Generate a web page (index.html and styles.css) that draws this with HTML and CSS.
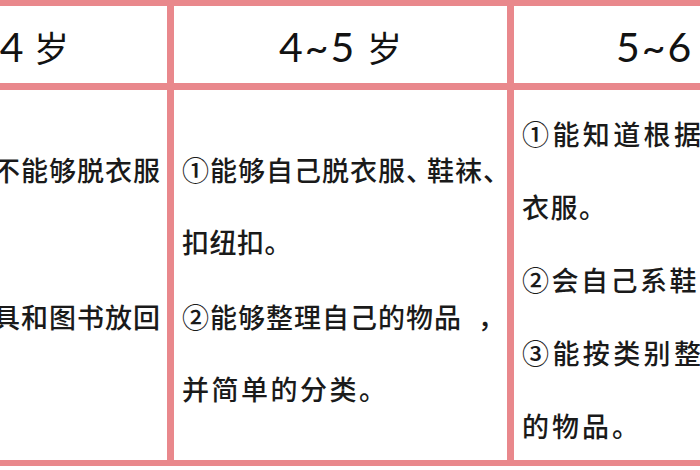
FILE: index.html
```html
<!DOCTYPE html>
<html lang="zh-CN">
<head>
<meta charset="utf-8">
<title>幼儿自理能力</title>
<link rel="stylesheet" href="styles.css">
</head>
<body>
<div class="table">
  <div class="head c1"><div class="head-text"><span class="num">4</span> <span class="sui">岁</span></div></div>
  <div class="head c2"><div class="head-text"><span class="num">4~5</span> <span class="sui">岁</span></div></div>
  <div class="head c3"><div class="head-text"><span class="num">5~6</span> <span class="sui">岁</span></div></div>

  <div class="body c1 lh72">
    <div class="para">
      <div class="line right ls3"><span>不能够脱衣服</span></div>
      <div class="line blank"></div>
    </div>
    <div class="para">
      <div class="line right ls3"><span>具和图书放回</span></div>
      <div class="line blank"></div>
    </div>
  </div>

  <div class="body c2 lh72">
    <div class="para">
      <div class="line ls3">①能够自己脱衣服<span class="trim">、</span>鞋袜、</div>
      <div class="line ls25">扣纽扣。</div>
    </div>
    <div class="para">
      <div class="line ls3">②能够整理自己的物品<span class="gap">，</span></div>
      <div class="line ls45">并简单的分类。</div>
    </div>
  </div>

  <div class="body c3 lh73">
    <div class="line ls54">①能知道根据</div>
    <div class="line ls35">衣服。</div>
    <div class="line ls45">②会自己系鞋</div>
    <div class="line ls54">③能按类别整</div>
    <div class="line ls5">的物品。</div>
  </div>
</div>
</body>
</html>
```

FILE: styles.css
```css
html, body {
  margin: 0;
  padding: 0;
  background: #ffffff;
}

body {
  width: 700px;
  height: 470px;
  overflow: hidden;
}

.table {
  display: grid;
  grid-template-columns: 167px 340px 329px;
  grid-template-rows: 84px 370px;
  width: 836px;
  border-top: 6px solid #e9888c;
  border-bottom: 6px solid #e9888c;
  color: #1a1a1a;
}

.head {
  display: flex;
  align-items: center;
  justify-content: center;
  border-bottom: 7px solid #e9888c;
}

.head.c1 {
  justify-content: flex-end;
  padding-right: 98px;
}

.c2, .c3 {
  border-left: 7px solid #e9888c;
}

.head-text {
  font-family: Lato, "Noto Sans CJK SC", sans-serif;
  font-size: 41px;
  line-height: 1;
  white-space: nowrap;
  padding-top: 4px;
  color: #121212;
}

.num {
  font-family: Lato, sans-serif;
  letter-spacing: 2px;
}

.head.c1 .num {
  letter-spacing: 0;
}

.head.c3 .head-text {
  margin-left: 5px;
}

.sui {
  font-family: "Noto Sans CJK SC", sans-serif;
  font-size: 35px;
  margin-left: 0;
}

.body {
  display: flex;
  flex-direction: column;
  justify-content: center;
  padding: 8px 8px 0 8px;
  font-family: "Noto Sans CJK SC", sans-serif;
  font-size: 27px;
  font-weight: 500;
  white-space: nowrap;
  min-width: 0;
}

.body.c1 {
  padding-right: 6px;
}

.lh72 { line-height: 72px; }
.lh73 { line-height: 73px; }

.para + .para {
  margin-top: 3px;
}

.line {
  white-space: nowrap;
}

.line.blank {
  height: 72px;
}

.line.right {
  display: flex;
  justify-content: flex-end;
}

.ls25 { letter-spacing: 0.5px; }
.ls3 { letter-spacing: 1px; }
.ls35 { letter-spacing: 1.5px; }
.ls45 { letter-spacing: 2.5px; }
.ls5 { letter-spacing: 3px; }
.ls54 { letter-spacing: 3.4px; }

.trim {
  letter-spacing: -6px;
}

.gap {
  margin-left: 16px;
}
```
